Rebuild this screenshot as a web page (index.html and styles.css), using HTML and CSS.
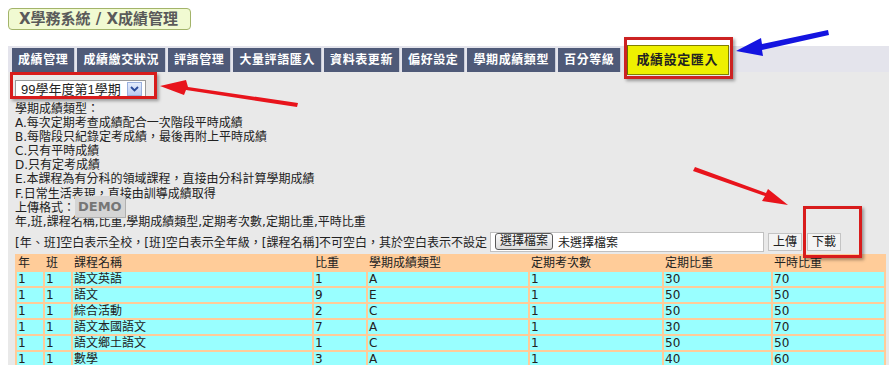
FILE: index.html
```html
<!DOCTYPE html>
<html lang="zh-Hant">
<head>
    <meta charset="UTF-8">
    <title>X成績管理 - 成績設定匯入</title>
    <link rel="stylesheet" href="styles.css">
</head>
<body>
    <div class="page">
        <div class="title-box">X學務系統 / X成績管理</div>

        <div class="nav">
            <div class="tab">成績管理</div>
            <div class="tab">成績繳交狀況</div>
            <div class="tab">評語管理</div>
            <div class="tab">大量評語匯入</div>
            <div class="tab">資料表更新</div>
            <div class="tab">偏好設定</div>
            <div class="tab">學期成績類型</div>
            <div class="tab">百分等級</div>
            <div class="tab active">成績設定匯入</div>
        </div>

        <div class="content">
            <div class="semester">
                <span>99學年度第1學期</span>
                <span class="drop">
                    <svg width="9" height="6" viewBox="0 0 9 6"><path d="M1 1 L4.5 4.5 L8 1" fill="none" stroke="#2a4a9a" stroke-width="1.8"/></svg>
                </span>
            </div>

            <div class="notes">
                <div>學期成績類型：</div>
                <div>A.每次定期考查成績配合一次階段平時成績</div>
                <div>B.每階段只紀錄定考成績，最後再附上平時成績</div>
                <div>C.只有平時成績</div>
                <div>D.只有定考成績</div>
                <div>E.本課程為有分科的領域課程，直接由分科計算學期成績</div>
                <div>F.日常生活表現，直接由訓導成績取得</div>
                <div>上傳格式：<span class="demo">DEMO</span></div>
                <div>年,班,課程名稱,比重,學期成績類型,定期考次數,定期比重,平時比重</div>
            </div>

            <div class="upload-row">
                <span>[年、班]空白表示全校，[班]空白表示全年級，[課程名稱]不可空白，其於空白表示不設定</span>
                <div class="file-box">
                    <span class="file-btn">選擇檔案</span>
                    <span class="file-name">未選擇檔案</span>
                </div>
                <span class="btn">上傳</span>
                <span class="btn">下載</span>
            </div>

            <table class="grid">
                <tr class="head">
                    <td class="c1">年</td><td class="c2">班</td><td class="c3">課程名稱</td><td class="c4">比重</td>
                    <td class="c5">學期成績類型</td><td class="c6">定期考次數</td><td class="c7">定期比重</td><td class="c8">平時比重</td>
                </tr>
                <tr><td>1</td><td>1</td><td>語文英語</td><td>1</td><td>A</td><td>1</td><td>30</td><td>70</td></tr>
                <tr><td>1</td><td>1</td><td>語文</td><td>9</td><td>E</td><td>1</td><td>50</td><td>50</td></tr>
                <tr><td>1</td><td>1</td><td>綜合活動</td><td>2</td><td>C</td><td>1</td><td>50</td><td>50</td></tr>
                <tr><td>1</td><td>1</td><td>語文本國語文</td><td>7</td><td>A</td><td>1</td><td>30</td><td>70</td></tr>
                <tr><td>1</td><td>1</td><td>語文鄉土語文</td><td>1</td><td>C</td><td>1</td><td>50</td><td>50</td></tr>
                <tr><td>1</td><td>1</td><td>數學</td><td>3</td><td>A</td><td>1</td><td>40</td><td>60</td></tr>
            </table>
        </div>
    </div>

    <!-- annotations drawn over the screenshot -->
    <div class="mark mark-select"></div>
    <div class="mark mark-tab"></div>
    <div class="mark mark-down"></div>
    <svg class="arrows" width="889" height="365" viewBox="0 0 889 365">
        <path d="M298 103 L188 87 L186 80 L160 86 L184 95 L186 90 L297 107 Z" fill="#e8141c"/>
        <path d="M693 171 L765 196 L762 201 L788 205 L768 189 L766 193 L695 167 Z" fill="#e8141c"/>
        <path d="M828 30 L762 44 L761 38 L736 51 L763 56 L762 50 L829 35 Z" fill="#1414e0"/>
    </svg>
</body>
</html>
```

FILE: styles.css
```css
body {
    margin: 0;
    font-family: "DejaVu Sans", "Noto Sans CJK TC", sans-serif;
    font-size: 12px;
    color: #222;
    background: #fff;
    position: relative;
    width: 889px;
    height: 365px;
    overflow: hidden;
}
.page {
    padding: 8px 0 0 8px;
}
.title-box {
    display: inline-block;
    background-color: #f1fad2;
    border: 1px solid #a3b46a;
    border-radius: 4px;
    padding: 1px 12px 1px 10px;
    font-size: 15px;
    font-weight: bold;
    color: #5a5a5a;
    height: 18px;
    line-height: 18px;
}
.nav {
    margin-top: 16px;
    height: 26px;
    background-color: #e4e4ec;
    display: flex;
    align-items: flex-end;
    gap: 2px;
    padding-left: 4px;
}
.tab {
    height: 24px;
    line-height: 24px;
    background-color: #4f5a78;
    color: #fff;
    font-weight: bold;
    padding: 0 6px;
    letter-spacing: 0.6px;
    border-right: 1px solid #c8ccd8;
}
.tab.active {
    background-color: #eef000;
    color: #222;
    height: 28px;
    line-height: 28px;
    margin-bottom: -3px;
    margin-left: 2px;
    padding: 0 10px 0 8px;
    border: 1px solid #808000;
    border-left: 3px solid #6a6a00;
    font-size: 13px;
}
.content {
    background-color: #e9e9e9;
    padding: 8px 5px 0 7px;
    height: 286px;
    overflow: hidden;
}
.semester {
    display: inline-flex;
    align-items: center;
    gap: 6px;
    height: 15px;
    padding: 0 3px 0 5px;
    background: #fff;
    border: 1px solid #9a9a9a;
    font-family: "Liberation Sans", "Noto Sans CJK TC", sans-serif;
    font-size: 13px;
}
.drop {
    display: flex;
    align-items: center;
    justify-content: center;
    width: 13px;
    height: 12px;
    background: linear-gradient(#e4ecfc, #b9cdf4);
    border: 1px solid #9ab0de;
}
.notes {
    margin-top: 5px;
    line-height: 14.1px;
    font-size: 12px;
}
.demo {
    position: relative;
    top: -1px;
    background-color: #d5d5d5;
    color: #767676;
    font-weight: bold;
    font-size: 13px;
    line-height: 12px;
    padding: 3px 3px;
    border-right: 1px solid #b0b0b0;
    border-bottom: 1px solid #b0b0b0;
}
.upload-row {
    display: flex;
    align-items: center;
    margin-top: 3px;
    height: 20px;
}
.file-box {
    display: flex;
    align-items: center;
    width: 272px;
    height: 18px;
    margin-left: 3px;
    background: #fff;
    border: 1px solid #c0c0c0;
}
.file-btn {
    margin-left: 4px;
    padding: 0 4px;
    height: 15px;
    line-height: 15px;
    border: 1px solid #5a5a5a;
    border-radius: 3px;
    background: linear-gradient(#fafafa, #dcdcdc);
}
.file-name {
    margin-left: 5px;
}
.btn {
    margin-left: 4px;
    padding: 0 4px;
    height: 16px;
    line-height: 16px;
    background: #f4f4f4;
    border: 1px solid #c4c4c4;
}
.btn + .btn {
    margin-left: 5px;
}
.grid {
    margin-top: 2px;
    width: 871px;
    background-color: #ffcc99;
    border-spacing: 2px;
    font-size: 12px;
}
.grid td {
    padding: 0 1px;
    height: 14px;
    line-height: 14px;
    background-color: #99ffff;
}
.grid .head td {
    background-color: #ffcc99;
}
.c1 { width: 24px; }
.c2 { width: 24px; }
.c3 { width: 237px; }
.c4 { width: 50px; }
.c5 { width: 158px; }
.c6 { width: 130px; }
.c7 { width: 105px; }
.mark {
    position: absolute;
    border: 3px solid #d81c1c;
    box-shadow: 2px 2px 3px rgba(0, 0, 0, 0.35);
}
.mark-select {
    left: 10px;
    top: 72px;
    width: 141px;
    height: 21px;
}
.mark-tab {
    left: 624px;
    top: 37px;
    width: 103px;
    height: 36px;
    border-color: #cc2222;
}
.mark-down {
    left: 803px;
    top: 206px;
    width: 53px;
    height: 46px;
}
.arrows {
    position: absolute;
    left: 0;
    top: 0;
    pointer-events: none;
}
```
